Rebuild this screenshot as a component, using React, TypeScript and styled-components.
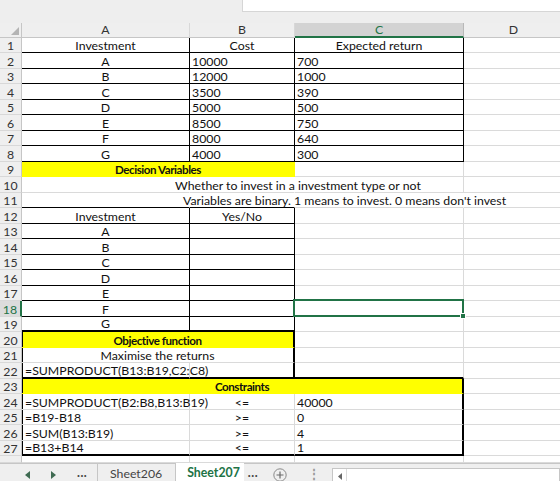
import React from "react";
import styled, { createGlobalStyle } from "styled-components";

const GREEN = "#217346";
const GRID = "#dadada";
const HEAD_BG = "#efefef";
const HEAD_LINE = "#c6c6c6";
const YELLOW = "#ffff00";
const COLS = [22, 168, 105, 169, 100];
const COL_TEMPLATE = COLS.map((w) => `${w}px`).join(" ");

const rowBottom = (r: number) => 37 + Math.round(r * 15.5 - 0.01);
const rowHeight = (r: number) =>
  r === 28 ? 462 - rowBottom(27) : rowBottom(r) - rowBottom(r - 1);

// border ranges [r1, r2, c1, c2]
const THIN = [
  [1, 8, 1, 3],
  [12, 19, 1, 2],
];
const THICK = [
  [20, 22, 1, 2],
  [23, 27, 1, 3],
];

function hEdge(r: number, c: number) {
  let w = 0;
  for (const [r1, r2, c1, c2] of THIN)
    if (c >= c1 && c <= c2 && r >= r1 - 1 && r <= r2) w = Math.max(w, 1);
  for (const [r1, r2, c1, c2] of THICK)
    if (c >= c1 && c <= c2 && (r === r1 - 1 || r === r2)) w = 2;
  return w;
}

function vEdge(r: number, c: number) {
  let w = 0;
  for (const [r1, r2, c1, c2] of THIN)
    if (r >= r1 && r <= r2 && c >= c1 - 1 && c <= c2) w = Math.max(w, 1);
  for (const [r1, r2, c1, c2] of THICK)
    if (r >= r1 && r <= r2 && (c === c1 - 1 || c === c2)) w = 2;
  return w;
}

const line = (w: number, fill?: string) =>
  w === 2 ? "2px solid #000" : w === 1 ? "1px solid #000" : `1px solid ${fill ?? GRID}`;

type CellData = {
  t?: string;
  span?: number;
  al?: "l" | "c";
  bold?: boolean;
  fill?: string;
  pad?: number;
  noR?: boolean;
  sel?: boolean;
};

const E: CellData = {};
const L = (t: string): CellData => ({ t, al: "l" });
const M = (t: string): CellData => ({ t, al: "c" });

const investments = ["A", "B", "C", "D", "E", "F", "G"];
const costs = ["10000", "12000", "3500", "5000", "8500", "8000", "4000"];
const returns = ["700", "1000", "390", "500", "750", "640", "300"];
const constraints = [
  ["=SUMPRODUCT(B2:B8,B13:B19)", "<=", "40000"],
  ["=B19-B18", ">=", "0"],
  ["=SUM(B13:B19)", ">=", "4"],
  ["=B13+B14", "<=", "1"],
];

const ROWS: CellData[][] = [
  [M("Investment"), M("Cost"), M("Expected return"), E],
  ...investments.map((x, i) => [M(x), L(costs[i]), L(returns[i]), E]),
  [{ t: "Decision Variables", span: 2, al: "c", bold: true, fill: YELLOW }, E, E],
  [{ t: "Whether to invest in a investment type or not", pad: 153, noR: true }, { noR: true }, E, E],
  [
    { t: "Variables are binary. 1 means to invest. 0 means don't invest", pad: 161, noR: true },
    { noR: true },
    { noR: true },
    E,
  ],
  [M("Investment"), M("Yes/No"), E, E],
  ...investments.map((x) => [M(x), E, x === "F" ? { sel: true } : E, E]),
  [{ t: "Objective function", span: 2, al: "c", bold: true, fill: YELLOW }, E, E],
  [{ t: "Maximise the returns", span: 2, al: "c" }, E, E],
  [L("=SUMPRODUCT(B13:B19,C2:C8)"), E, E, E],
  [{ t: "Constraints", span: 3, al: "c", bold: true, fill: YELLOW }, E],
  ...constraints.map(([a, b, c]) => [L(a), M(b), L(c), E]),
  [E, E, E, E],
];

const SELECTED_ROW = 18;

const GlobalStyle = createGlobalStyle`
  html, body { margin: 0; padding: 0; background: #fff; }
  body { overflow: hidden; }
`;

const Page = styled.div`
  width: 560px;
  height: 481px;
  overflow: hidden;
  display: flex;
  flex-direction: column;
  background: #fff;
  font-family: Lato, "Liberation Sans", sans-serif;
  font-size: 12.3px;
  color: #111;
`;

const TopBar = styled.div`
  height: 23px;
  flex: none;
  display: flex;
  align-items: flex-start;
  background: #eeeeee;
`;

const FormulaBox = styled.div`
  margin-left: 242px;
  flex: 1;
  height: 12px;
  box-sizing: border-box;
  background: #fff;
  border-left: 1px solid #d6d6d6;
  border-bottom: 1px solid #d6d6d6;
`;

const Sheet = styled.div`
  flex: 1;
  overflow: hidden;
  background: #fff;
`;

const Row = styled.div<{ $h: number }>`
  display: grid;
  grid-template-columns: ${COL_TEMPLATE};
  width: max-content;
  height: ${(p) => p.$h}px;
`;

const Corner = styled.div`
  box-sizing: border-box;
  background: ${HEAD_BG};
  border-right: 1px solid ${HEAD_LINE};
  border-bottom: 1px solid ${HEAD_LINE};
  display: flex;
  align-items: flex-end;
  justify-content: flex-end;
  padding: 0 2px 2px 0;
`;

const ColHead = styled.div<{ $sel?: boolean }>`
  box-sizing: border-box;
  display: flex;
  align-items: center;
  justify-content: center;
  background: ${(p) => (p.$sel ? "#d3d3d3" : HEAD_BG)};
  color: ${(p) => (p.$sel ? GREEN : "#333")};
  border-right: 1px solid ${(p) => (p.$sel ? "#b8b8b8" : "#d8d8d8")};
  border-bottom: ${(p) => (p.$sel ? `2px solid ${GREEN}` : `1px solid ${HEAD_LINE}`)};
  line-height: 12px;
`;

const RowHead = styled.div<{ $sel?: boolean }>`
  box-sizing: border-box;
  display: flex;
  align-items: flex-end;
  justify-content: center;
  background: ${(p) => (p.$sel ? "#dcdcdc" : HEAD_BG)};
  color: ${(p) => (p.$sel ? GREEN : "#333")};
  border-right: ${(p) => (p.$sel ? `2px solid ${GREEN}` : `1px solid ${HEAD_LINE}`)};
  border-bottom: 1px solid #d8d8d8;
  line-height: 12px;
  overflow: hidden;
`;

const Cell = styled.div<{
  $span: number;
  $right: string;
  $bottom: string;
  $fill?: string;
  $al: string;
  $bold?: boolean;
  $pad: number;
  $inset: number;
}>`
  grid-column: span ${(p) => p.$span};
  position: relative;
  box-sizing: border-box;
  min-width: 0;
  display: flex;
  align-items: flex-end;
  justify-content: ${(p) => (p.$al === "c" ? "center" : "flex-start")};
  padding-left: ${(p) => p.$pad}px;
  border-right: ${(p) => p.$right};
  border-bottom: ${(p) => p.$bottom};
  background: ${(p) => p.$fill ?? "transparent"};
  box-shadow: ${(p) => (p.$inset ? `inset ${p.$inset}px 0 0 #000` : "none")};
  font-weight: ${(p) => (p.$bold ? 700 : 400)};
  font-size: ${(p) => (p.$bold ? "11.6px" : "inherit")};
  letter-spacing: ${(p) => (p.$bold ? "-0.45px" : "normal")};
  line-height: 12px;
  white-space: nowrap;
`;

const Selection = styled.div`
  position: absolute;
  top: -2px;
  left: -2px;
  right: -1px;
  bottom: -1px;
  border: 2px solid ${GREEN};
  pointer-events: none;
  z-index: 2;
`;

const FillHandle = styled.div`
  position: absolute;
  right: -4px;
  bottom: -4px;
  width: 6px;
  height: 6px;
  box-sizing: border-box;
  background: ${GREEN};
  border: 1px solid #fff;
`;

const TabBar = styled.div`
  height: 18px;
  flex: none;
  box-sizing: border-box;
  display: flex;
  align-items: stretch;
  background: #efefef;
  border-top: 1px solid ${HEAD_LINE};
  color: #444;
`;

const Nav = styled.div`
  width: 98px;
  box-sizing: border-box;
  display: flex;
  align-items: flex-start;
  gap: 21px;
  padding-left: 25px;
  border-right: 1px solid ${HEAD_LINE};
`;

const NavArrow = styled.svg`
  margin-top: 7px;
  flex: none;
`;

const Dots = styled.span`
  padding-top: 2px;
  font-weight: 700;
  letter-spacing: 0.5px;
  line-height: 14px;
`;

const Tab = styled.div<{ $active?: boolean }>`
  display: flex;
  align-items: flex-start;
  padding: 3px ${(p) => (p.$active ? "4px 0 11px" : "13px 0 12px")};
  line-height: 14px;
  background: ${(p) => (p.$active ? "#fff" : "transparent")};
  color: ${(p) => (p.$active ? GREEN : "#444")};
  font-weight: ${(p) => (p.$active ? 700 : 400)};
  border-right: ${(p) => (p.$active ? "none" : `1px solid ${HEAD_LINE}`)};
  margin-top: ${(p) => (p.$active ? "-1px" : "0")};
`;

const More = styled(Dots)`
  margin-left: 4px;
`;

const AddSheet = styled.svg`
  margin: 4px 0 0 15px;
  flex: none;
`;

const Splitter = styled.span`
  margin-left: 21px;
  padding-top: 4px;
  line-height: 12px;
  color: #999;
  font-weight: 700;
`;

const HScroll = styled.div`
  flex: 1;
  margin: 4px 0 0 12px;
  display: flex;
  background: #fff;
  border: 1px solid ${HEAD_LINE};
  border-bottom: none;
`;

const ScrollButton = styled.div`
  width: 14px;
  box-sizing: border-box;
  border-right: 1px solid #dcdcdc;
  display: flex;
  justify-content: center;
  padding-top: 4px;
`;

function SheetRow({ r, cells }: { r: number; cells: CellData[] }) {
  let col = 1;
  const sel = r === SELECTED_ROW;
  return (
    <Row $h={rowHeight(r)}>
      <RowHead $sel={sel}>{r <= 27 ? r : ""}</RowHead>
      {cells.map((cell, i) => {
        const span = cell.span ?? 1;
        const start = col;
        col += span;
        const last = start + span - 1;
        let bw = 0;
        for (let c = start; c <= last; c++) bw = Math.max(bw, hEdge(r, c));
        const rw = vEdge(r, last);
        const right = cell.noR ? "1px solid transparent" : line(rw, cell.fill);
        const inset = start === 1 && vEdge(r, 0) === 2 ? 1 : 0;
        const pad = cell.al === "l" ? 2 + inset : cell.pad ?? 0;
        return (
          <Cell
            key={i}
            $span={span}
            $right={right}
            $bottom={line(bw, cell.fill)}
            $fill={cell.fill}
            $al={cell.al ?? "l"}
            $bold={cell.bold}
            $pad={pad}
            $inset={inset}
          >
            {cell.t}
            {cell.sel && (
              <Selection>
                <FillHandle />
              </Selection>
            )}
          </Cell>
        );
      })}
    </Row>
  );
}

export default function App() {
  return (
    <Page>
      <GlobalStyle />
      <TopBar>
        <FormulaBox />
      </TopBar>
      <Sheet>
        <Row $h={15}>
          <Corner>
            <svg width="8" height="8" viewBox="0 0 8 8">
              <polygon points="8,0 8,8 0,8" fill="#b4b4b4" />
            </svg>
          </Corner>
          {["A", "B", "C", "D"].map((h) => (
            <ColHead key={h} $sel={h === "C"}>
              {h}
            </ColHead>
          ))}
        </Row>
        {ROWS.map((cells, i) => (
          <SheetRow key={i} r={i + 1} cells={cells} />
        ))}
      </Sheet>
      <TabBar>
        <Nav>
          <NavArrow width="5" height="8" viewBox="0 0 5 8">
            <polygon points="5,0 5,8 0,4" fill="#3f6b52" />
          </NavArrow>
          <NavArrow width="5" height="8" viewBox="0 0 5 8">
            <polygon points="0,0 0,8 5,4" fill="#3f6b52" />
          </NavArrow>
          <Dots>...</Dots>
        </Nav>
        <Tab>Sheet206</Tab>
        <Tab $active>Sheet207</Tab>
        <More>...</More>
        <AddSheet width="14" height="14" viewBox="0 0 14 14">
          <circle cx="7" cy="7" r="6.2" fill="none" stroke="#8a8a8a" strokeWidth="1" />
          <path d="M7 3.5v7M3.5 7h7" stroke="#6a6a6a" strokeWidth="1.2" />
        </AddSheet>
        <Splitter>⋮</Splitter>
        <HScroll>
          <ScrollButton>
            <svg width="4" height="7" viewBox="0 0 4 7">
              <polygon points="4,0 4,7 0,3.5" fill="#666" />
            </svg>
          </ScrollButton>
        </HScroll>
      </TabBar>
    </Page>
  );
}
